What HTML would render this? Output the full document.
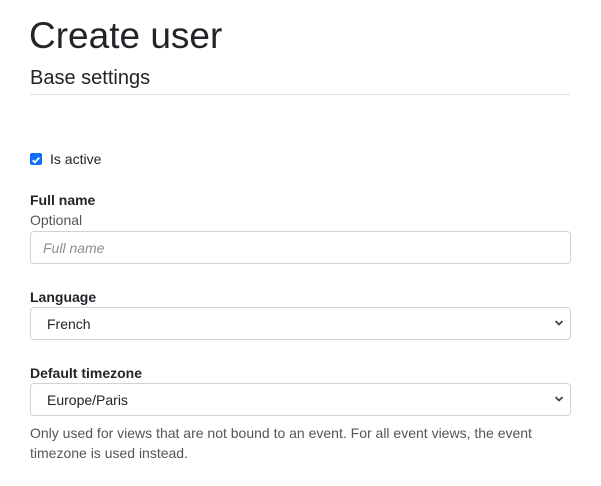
<!DOCTYPE html>
<html><head><style>
body{margin:0;width:601px;height:486px;background:#fff;font-family:"Liberation Sans",sans-serif;color:#212529;position:relative;overflow:hidden}
.a{position:absolute;white-space:nowrap}
.box{position:absolute;left:30px;width:539px;height:31px;border:1px solid #ced4da;border-radius:4px;background:#fff}
.lbl{font-weight:bold;font-size:14px}
.chev{position:absolute;right:6px;top:11px}
</style></head><body>
<div class="a" style="left:29px;top:14px;font-size:37px;line-height:44px">Create user</div>
<div class="a" style="left:30px;top:65px;font-size:20px;line-height:26px">Base settings</div>
<div class="a" style="left:30px;top:94px;width:540px;height:1px;background:#dee2e6"></div>
<div class="a" style="left:30px;top:153px;width:12px;height:12px;background:#0d6efd;border-radius:2px">
<svg width="12" height="12" viewBox="0 0 12 12"><path d="M2.7 6.2l2.2 2.2 4.4-4.8" stroke="#fff" stroke-width="1.8" fill="none"/></svg></div>
<div class="a" style="left:50px;top:151px;font-size:14px;line-height:17px">Is active</div>
<div class="a lbl" style="left:30px;top:192px;line-height:17px">Full name</div>
<div class="a" style="left:30px;top:212px;font-size:14px;line-height:17px;color:#555">Optional</div>
<div class="box" style="top:231px"><span class="a" style="left:12px;top:8px;font-size:14px;font-style:italic;color:#8a8f94">Full name</span></div>
<div class="a lbl" style="left:30px;top:289px;line-height:17px">Language</div>
<div class="box" style="top:307px"><span class="a" style="left:16px;top:8px;font-size:14px">French</span>
<svg class="chev" width="10" height="8" viewBox="0 0 10 8"><path d="M1.5 2l3.5 3.5 3.5-3.5" stroke="#444" stroke-width="1.8" fill="none"/></svg></div>
<div class="a lbl" style="left:30px;top:365px;line-height:17px">Default timezone</div>
<div class="box" style="top:383px"><span class="a" style="left:16px;top:8px;font-size:14px">Europe/Paris</span>
<svg class="chev" width="10" height="8" viewBox="0 0 10 8"><path d="M1.5 2l3.5 3.5 3.5-3.5" stroke="#444" stroke-width="1.8" fill="none"/></svg></div>
<div class="a" style="left:30px;top:424px;font-size:14px;line-height:19.5px;color:#555;white-space:normal;width:545px">Only used for views that are not bound to an event. For all event views, the event timezone is used instead.</div>
</body></html>
